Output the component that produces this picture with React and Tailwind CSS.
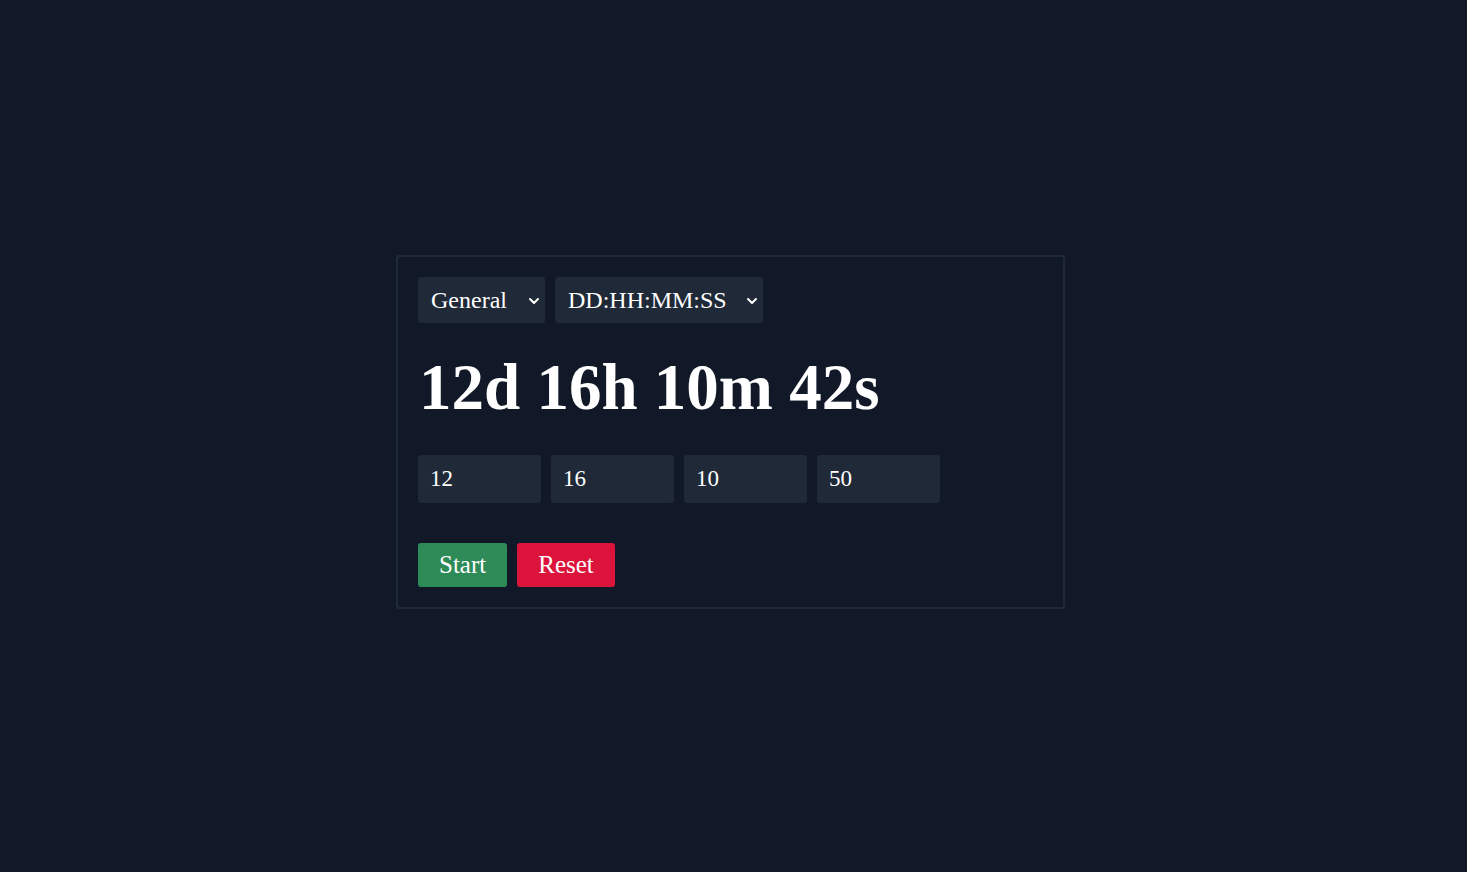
import React, { useState } from 'react';
import { ChevronDown } from 'lucide-react';

const serif = { fontFamily: '"Liberation Serif", "DejaVu Serif", serif' };

const Select = ({ value, options, width }) => (
  <div className={`relative ${width}`}>
    <select
      defaultValue={value}
      className="appearance-none w-full h-[46px] bg-[#1f2937] text-white text-[24px] rounded-[3px] pl-[13px] pr-8 outline-none"
      style={serif}
    >
      {options.map((o) => (
        <option key={o}>{o}</option>
      ))}
    </select>
    <ChevronDown size={16} strokeWidth={3} className="absolute right-[3px] top-[16px] text-white pointer-events-none" />
  </div>
);

const App = () => {
  const [values] = useState(['12', '16', '10', '50']);

  return (
    <div className="min-h-screen bg-[#111827] flex items-center justify-center pr-[6px] pb-[8px]" style={serif}>
      <div className="w-[669px] border-2 border-[#1f2937] rounded-[3px] p-5">
        <div className="flex gap-[10px]">
          <Select value="General" options={['General', 'Pomodoro', 'Countdown']} width="w-[127px]" />
          <Select value="DD:HH:MM:SS" options={['DD:HH:MM:SS', 'HH:MM:SS', 'MM:SS']} width="w-[208px]" />
        </div>

        <h1 className="text-white font-bold text-[65px] leading-none mt-[32px] ml-[1px]">12d 16h 10m 42s</h1>

        <div className="flex gap-[10px] mt-[35px]">
          {values.map((v, i) => (
            <input
              key={i}
              defaultValue={v}
              className="w-[123px] h-[48px] bg-[#1f2937] text-white text-[23px] rounded-[3px] px-3 outline-none"
              style={serif}
            />
          ))}
        </div>

        <div className="flex gap-[10px] mt-[40px]">
          <button className="h-[44px] px-[21px] bg-[#2e8b57] text-white text-[25px] rounded-[3px]">Start</button>
          <button className="h-[44px] px-[21px] bg-[#dc143c] text-white text-[25px] rounded-[3px]">Reset</button>
        </div>
      </div>
    </div>
  );
};

export default App;
